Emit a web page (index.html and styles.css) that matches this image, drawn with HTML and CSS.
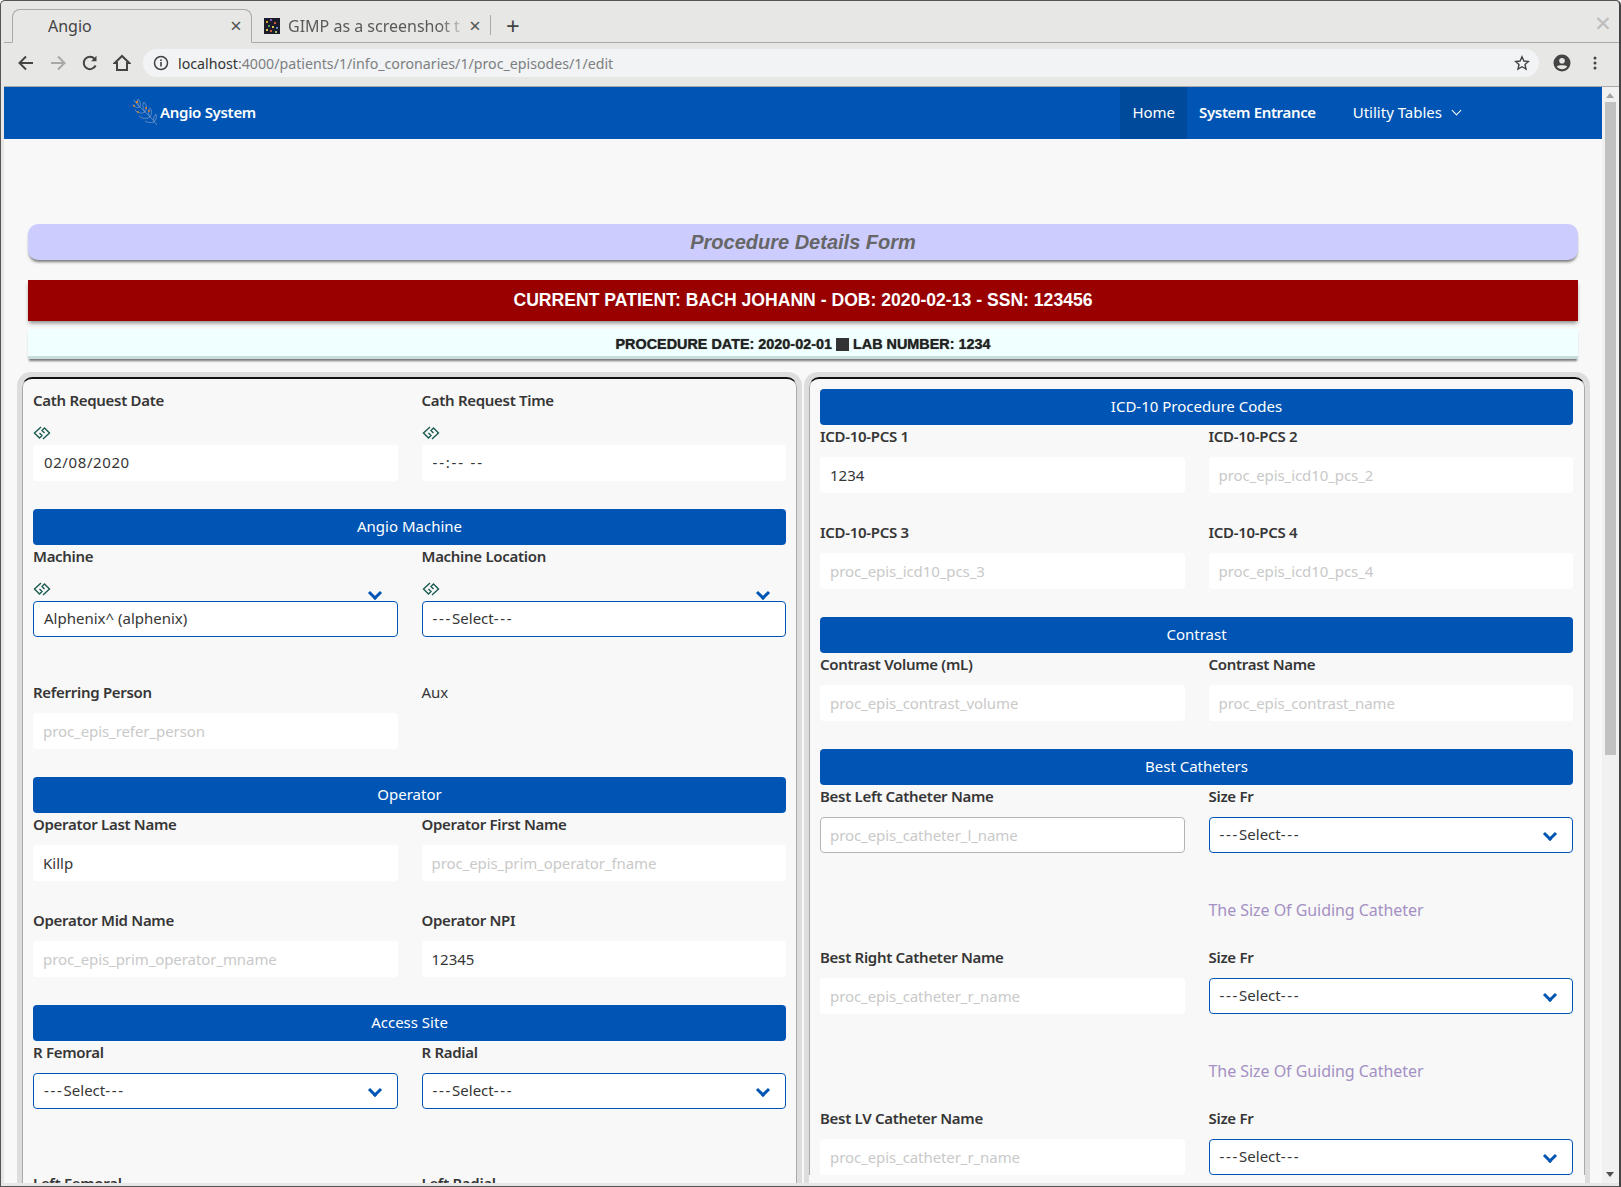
FILE: index.html
```html
<!DOCTYPE html>
<html lang="en">
<head>
  <meta charset="UTF-8" />
  <title>Angio</title>
  <link rel="stylesheet" href="styles.css">
</head>
<body>

<div class="window">

  <!-- Browser tabs -->
  <div class="tabbar">
    <div class="tab active">
      <span class="tab-title">Angio</span>
      <span class="tab-close">×</span>
    </div>
    <div class="tab other">
      <svg class="favicon" width="16" height="16" viewBox="0 0 16 16">
        <rect width="16" height="16" fill="#1b1b2a"/>
        <rect x="2" y="3" width="2" height="2" fill="#c9a227"/>
        <rect x="6" y="1" width="2" height="2" fill="#7a5fb0"/>
        <rect x="10" y="4" width="2" height="2" fill="#d05a3a"/>
        <rect x="4" y="7" width="2" height="2" fill="#4f9d5a"/>
        <rect x="8" y="8" width="2" height="2" fill="#d6c84a"/>
        <rect x="12" y="9" width="2" height="2" fill="#5a86c9"/>
        <rect x="2" y="11" width="2" height="2" fill="#d6c84a"/>
        <rect x="6" y="12" width="2" height="2" fill="#c9583f"/>
        <rect x="11" y="13" width="2" height="2" fill="#8fc46a"/>
      </svg>
      <span class="tab-title fade">GIMP as a screenshot t</span>
      <span class="tab-close">×</span>
    </div>
    <span class="tab-sep"></span>
    <span class="new-tab">+</span>
    <span class="win-close">×</span>
  </div>

  <!-- Browser toolbar -->
  <div class="toolbar">
    <svg class="tool" width="18" height="18" viewBox="0 0 18 18" fill="none" stroke="#444" stroke-width="2"><path d="M16 9H3M9 2.5 2.5 9 9 15.5"/></svg>
    <svg class="tool" width="18" height="18" viewBox="0 0 18 18" fill="none" stroke="#a8a8a8" stroke-width="2"><path d="M2 9h13M9 2.5 15.5 9 9 15.5"/></svg>
    <svg class="tool" width="18" height="18" viewBox="0 0 18 18" fill="none" stroke="#444" stroke-width="2"><path d="M14.6 11.5A6.2 6.2 0 1 1 13.6 4.8"/><path d="M15.5 1.8v5.4h-5.4z" fill="#444" stroke="none"/></svg>
    <svg class="tool" width="18" height="18" viewBox="0 0 18 18" fill="none" stroke="#444" stroke-width="2"><path d="M9 2 1.8 9H4v7h10V9h2.2z" stroke-linejoin="miter"/></svg>
    <div class="omnibox">
      <svg class="info" width="16" height="16" viewBox="0 0 16 16" fill="none"><circle cx="8" cy="8" r="6.5" stroke="#444" stroke-width="1.5"/><rect x="7.2" y="7" width="1.6" height="4.5" fill="#444"/><rect x="7.2" y="4.4" width="1.6" height="1.6" fill="#444"/></svg>
      <span class="url"><span class="host">localhost</span>:4000/patients/1/info_coronaries/1/proc_episodes/1/edit</span>
      <svg class="star" width="16" height="16" viewBox="0 0 16 16" fill="none" stroke="#444" stroke-width="1.4"><path d="M8 1.8l1.9 4.2 4.5.5-3.4 3 1 4.5L8 11.7 4 14l1-4.5-3.4-3 4.5-.5z"/></svg>
    </div>
    <svg class="avatar" width="18" height="18" viewBox="0 0 18 18"><circle cx="9" cy="9" r="8.5" fill="#444"/><circle cx="9" cy="6.8" r="2.8" fill="#e7e7e5"/><path d="M3.8 12.6C5 10.8 13 10.8 14.2 12.6 13 14.4 11 15.2 9 15.2S5 14.4 3.8 12.6z" fill="#e7e7e5"/></svg>
    <svg class="dots" width="4" height="14" viewBox="0 0 4 14" fill="#444"><circle cx="2" cy="2" r="1.5"/><circle cx="2" cy="7" r="1.5"/><circle cx="2" cy="12" r="1.5"/></svg>
  </div>

  <div class="viewport">
    <div class="page">

      <nav class="navbar">
        <a class="brand">
          <svg class="logo" width="28" height="30" viewBox="0 0 28 30" fill="none" stroke="#7597c6" stroke-width="0.8">
            <path d="M26 28C22 22 16 17 12 13 9 10 6 8 3 3"/>
            <path d="M9 10C6 11 3 10 2 7M9 10C10 7 9 3 7 2 6 5 7 8 9 10z"/>
            <path d="M14 15C11 17 6 16 4 13M14 15C16 12 16 8 13 5 11 8 12 12 14 15z"/>
            <path d="M19 20C16 22 11 22 8 19M19 20C21 17 21 13 19 11 17 13 17 17 19 20z"/>
            <path d="M23 25C20 26 17 26 14 24M23 25C25 23 26 20 25 17 23 19 22 22 23 25z"/>
            <circle cx="6" cy="5" r="1.200" fill="#d9822b" stroke="none"/>
            <circle cx="3" cy="9" r="1" fill="#d9822b" stroke="none"/>
            <circle cx="15" cy="11" r="1.100" fill="#d9822b" stroke="none"/>
            <circle cx="18" cy="14" r="1" fill="#d9822b" stroke="none"/>
            <circle cx="7" cy="15" r="1" fill="#d9822b" stroke="none"/>
          </svg>
          <span>Angio System</span>
        </a>
        <div class="nav-menu">
          <a class="nav-item current">Home</a>
          <a class="nav-item strong">System Entrance</a>
          <a class="nav-item dropdown">Utility Tables <i class="nav-arrow"></i></a>
        </div>
      </nav>

      <h2 class="form-title">Procedure Details Form</h2>
      <div class="patient-bar">CURRENT PATIENT: BACH JOHANN - DOB: 2020-02-13 - SSN: 123456</div>
      <div class="proc-bar">PROCEDURE DATE: 2020-02-01 <span class="square"></span> LAB NUMBER: 1234</div>

      <div class="panels">

        <section class="panel">
          <div class="panel-inner">
            <div class="row">
              <div class="field">
                <label>Cath Request Date</label>
                <div class="req-icon"><svg width="18" height="14" viewBox="0 0 18 14"><use href="#link-mark"/></svg></div>
                <input class="input date" value="02/08/2020">
              </div>
              <div class="field">
                <label>Cath Request Time</label>
                <div class="req-icon"><svg width="18" height="14" viewBox="0 0 18 14"><use href="#link-mark"/></svg></div>
                <input class="input time" value="--:-- --">
              </div>
            </div>

            <div class="band">Angio Machine</div>
            <div class="row tall">
              <div class="field">
                <label>Machine</label>
                <div class="select-wrap lifted">
                  <div class="req-icon"><svg width="18" height="14" viewBox="0 0 18 14"><use href="#link-mark"/></svg></div>
                  <div class="select">Alphenix^ (alphenix)</div>
                  <i class="arrow"></i>
                </div>
              </div>
              <div class="field">
                <label>Machine Location</label>
                <div class="select-wrap lifted">
                  <div class="req-icon"><svg width="18" height="14" viewBox="0 0 18 14"><use href="#link-mark"/></svg></div>
                  <div class="select"><span class="dash">---</span>Select<span class="dash">---</span></div>
                  <i class="arrow"></i>
                </div>
              </div>
            </div>

            <div class="row">
              <div class="field">
                <label>Referring Person</label>
                <input class="input" placeholder="proc_epis_refer_person">
              </div>
              <div class="field">
                <label class="plain">Aux</label>
              </div>
            </div>

            <div class="band">Operator</div>
            <div class="row">
              <div class="field">
                <label>Operator Last Name</label>
                <input class="input" value="Killp">
              </div>
              <div class="field">
                <label>Operator First Name</label>
                <input class="input" placeholder="proc_epis_prim_operator_fname">
              </div>
            </div>
            <div class="row">
              <div class="field">
                <label>Operator Mid Name</label>
                <input class="input" placeholder="proc_epis_prim_operator_mname">
              </div>
              <div class="field">
                <label>Operator NPI</label>
                <input class="input" value="12345">
              </div>
            </div>

            <div class="band">Access Site</div>
            <div class="row taller">
              <div class="field">
                <label>R Femoral</label>
                <div class="select-wrap">
                  <div class="select"><span class="dash">---</span>Select<span class="dash">---</span></div>
                  <i class="arrow"></i>
                </div>
              </div>
              <div class="field">
                <label>R Radial</label>
                <div class="select-wrap">
                  <div class="select"><span class="dash">---</span>Select<span class="dash">---</span></div>
                  <i class="arrow"></i>
                </div>
              </div>
            </div>
            <div class="row">
              <div class="field"><label>Left Femoral</label></div>
              <div class="field"><label>Left Radial</label></div>
            </div>
          </div>
        </section>

        <section class="panel">
          <div class="panel-inner">
            <div class="band">ICD-10 Procedure Codes</div>
            <div class="row">
              <div class="field">
                <label>ICD-10-PCS 1</label>
                <input class="input" value="1234">
              </div>
              <div class="field">
                <label>ICD-10-PCS 2</label>
                <input class="input" placeholder="proc_epis_icd10_pcs_2">
              </div>
            </div>
            <div class="row">
              <div class="field">
                <label>ICD-10-PCS 3</label>
                <input class="input" placeholder="proc_epis_icd10_pcs_3">
              </div>
              <div class="field">
                <label>ICD-10-PCS 4</label>
                <input class="input" placeholder="proc_epis_icd10_pcs_4">
              </div>
            </div>

            <div class="band">Contrast</div>
            <div class="row">
              <div class="field">
                <label>Contrast Volume (mL)</label>
                <input class="input" placeholder="proc_epis_contrast_volume">
              </div>
              <div class="field">
                <label>Contrast Name</label>
                <input class="input" placeholder="proc_epis_contrast_name">
              </div>
            </div>

            <div class="band">Best Catheters</div>
            <div class="row snug">
              <div class="field">
                <label>Best Left Catheter Name</label>
                <input class="input outlined" placeholder="proc_epis_catheter_l_name">
              </div>
              <div class="field">
                <label>Size Fr</label>
                <div class="select-wrap">
                  <div class="select"><span class="dash">---</span>Select<span class="dash">---</span></div>
                  <i class="arrow"></i>
                </div>
                <p class="help">The Size Of Guiding Catheter</p>
              </div>
            </div>
            <div class="row snug">
              <div class="field">
                <label>Best Right Catheter Name</label>
                <input class="input" placeholder="proc_epis_catheter_r_name">
              </div>
              <div class="field">
                <label>Size Fr</label>
                <div class="select-wrap">
                  <div class="select"><span class="dash">---</span>Select<span class="dash">---</span></div>
                  <i class="arrow"></i>
                </div>
                <p class="help">The Size Of Guiding Catheter</p>
              </div>
            </div>
            <div class="row snug">
              <div class="field">
                <label>Best LV Catheter Name</label>
                <input class="input" placeholder="proc_epis_catheter_r_name">
              </div>
              <div class="field">
                <label>Size Fr</label>
                <div class="select-wrap">
                  <div class="select"><span class="dash">---</span>Select<span class="dash">---</span></div>
                  <i class="arrow"></i>
                </div>
              </div>
            </div>
          </div>
        </section>

      </div>
    </div>

    <div class="scrollbar">
      <i class="sb-up"></i>
      <div class="sb-thumb"></div>
      <i class="sb-down"></i>
    </div>
  </div>
</div>

<svg width="0" height="0" class="defs">
  <symbol id="link-mark" viewBox="0 0 18 14">
    <path d="M8 1 1.500 7l5 5L9 9.500 6.500 7M10 13 16.500 7l-5-5L9 4.500 11.500 7" fill="none" stroke="#1a5a50" stroke-width="1.400"/>
  </symbol>
</svg>

</body>
</html>
```

FILE: styles.css
```css
:root {
  --blue: #0055b4;
  --text: #363636;
  --page: #f8f8f8;
  --chrome: #e7e7e5;
}

* {
  box-sizing: border-box;
}

html, body {
  margin: 0;
  height: 100%;
  overflow: hidden;
}

body {
  font-family: "Noto Sans", sans-serif;
  font-size: 15px;
  color: var(--text);
}

.defs {
  position: absolute;
}

.window {
  width: 1621px;
  height: 1187px;
  display: flex;
  flex-direction: column;
  background: var(--chrome);
  border-top: 1px solid #555;
  border-left: 1px solid #555;
  border-right: 2px solid #444;
  border-bottom: 1px solid #555;
  border-radius: 5px 5px 0 0;
  padding: 0 0 3px 3px;
  overflow: hidden;
}

/* browser tabs */
.tabbar {
  height: 42px;
  flex: none;
  display: flex;
  align-items: flex-end;
  border-bottom: 1px solid #a9a9a7;
  position: relative;
}

.tab {
  height: 33px;
  display: flex;
  align-items: center;
  font-size: 16px;
  color: #444;
}

.tab.active {
  width: 240px;
  margin-left: 8px;
  padding: 0 7px 0 35px;
  border: 1px solid #a9a9a7;
  border-bottom: 1px solid var(--chrome);
  border-radius: 8px 8px 0 0;
  margin-bottom: -1px;
  height: 34px;
}

.tab.other {
  width: 237px;
  padding: 0 6px 0 12px;
}

.tab-title {
  flex: 1;
  white-space: nowrap;
  overflow: hidden;
}

.tab-title.fade {
  margin-left: 8px;
  color: #5a5a5a;
  -webkit-mask-image: linear-gradient(to right, #000 85%, transparent);
}

.tab-close {
  font-size: 20px;
  line-height: 1;
  width: 16px;
  text-align: center;
  color: #555;
}

.favicon {
  flex: none;
}

.tab-sep {
  width: 1px;
  height: 20px;
  background: #aaa;
  margin: 0 0 7px 1px;
}

.new-tab {
  font-size: 24px;
  line-height: 33px;
  margin-left: 15px;
  color: #444;
}

.win-close {
  position: absolute;
  right: 8px;
  top: 6px;
  font-size: 28px;
  line-height: 30px;
  color: #bdbdbd;
}

/* browser toolbar */
.toolbar {
  height: 44px;
  flex: none;
  display: flex;
  align-items: center;
  padding: 0 15px 3px 13px;
  border-bottom: 1px solid #aaa;
}

.tool {
  margin-right: 14px;
  flex: none;
}

.omnibox {
  width: 1396px;
  height: 28px;
  margin-left: -2px;
  background: #f1f3f4;
  border-radius: 14px;
  display: flex;
  align-items: center;
  padding: 0 9px 0 10px;
  font-size: 14.200px;
}

.info {
  flex: none;
  margin-right: 9px;
}

.url {
  flex: 1;
  color: #7d7f82;
}

.host {
  color: #333;
}

.avatar {
  margin-left: 14px;
}

.dots {
  margin-left: 22px;
}

/* page */
.viewport {
  flex: 1;
  display: flex;
  min-height: 0;
}

.page {
  width: 1598px;
  background: var(--page);
  overflow: hidden;
}

.scrollbar {
  width: 17px;
  background: #f1f1f1;
  display: flex;
  flex-direction: column;
  align-items: center;
  position: relative;
}

.sb-thumb {
  width: 11px;
  height: 653px;
  margin-top: 15px;
  background: #c1c1c1;
}

.sb-up, .sb-down {
  position: absolute;
  left: 4px;
  width: 0;
  height: 0;
  border: 4px solid transparent;
}

.sb-up {
  top: 2px;
  border-bottom: 5px solid #a3a3a3;
}

.sb-down {
  bottom: 2px;
  border-top: 5px solid #505050;
}

.navbar {
  height: 52px;
  padding-bottom: 2px;
  background: var(--blue);
  display: flex;
  justify-content: space-between;
  color: #fff;
}

.brand {
  display: flex;
  align-items: center;
  margin-left: 127px;
  font-weight: 600;
  font-size: 15px;
  letter-spacing: -0.3px;
}

.logo {
  margin-right: 1px;
}

.nav-menu {
  display: flex;
  margin-right: 139px;
  margin-bottom: -2px;
}

.nav-item {
  display: flex;
  align-items: center;
  padding: 0 12px 2px;
}

.nav-item.current {
  background: #004a9c;
}

.nav-item.strong {
  font-weight: 600;
  letter-spacing: -0.35px;
  padding-right: 13px;
}

.nav-item.dropdown {
  margin-left: 24px;
  padding: 0 0 2px;
}

.nav-arrow {
  width: 7px;
  height: 7px;
  margin: -3px 3px 0 11px;
  border-left: 1.500px solid #fff;
  border-bottom: 1.500px solid #fff;
  transform: rotate(-45deg);
}

.form-title {
  height: 36px;
  margin: 85px 24px 0;
  background: #ccccff;
  border-radius: 10px;
  box-shadow: 0 3px 3px -1px #777;
  font: italic bold 20px/36px "Liberation Sans", sans-serif;
  color: #666;
  text-align: center;
}

.patient-bar {
  height: 41px;
  margin: 20px 24px 0;
  background: #990000;
  box-shadow: 0 3px 4px -1px #888;
  font: bold 17.600px/40px "Liberation Sans", sans-serif;
  color: #fff;
  text-align: center;
}

.proc-bar {
  height: 30px;
  margin: 8px 24px 0;
  background: #f0ffff;
  border-bottom: 3px solid #c8dcdc;
  box-shadow: 0 3px 2px -1px #777;
  font: bold 14.400px/30px "Liberation Sans", sans-serif;
  color: #222;
  text-shadow: 0 0 1px #555;
  text-align: center;
}

.square {
  display: inline-block;
  width: 13px;
  height: 13px;
  background: #333;
  vertical-align: -2px;
}

.panels {
  display: grid;
  grid-template-columns: 785px 786px;
  column-gap: 2px;
  margin: 13px 0 0 13px;
}

.panel {
  border: 5px solid #ddd;
  border-bottom: none;
  border-radius: 14px 14px 0 0;
}

.panel-inner {
  border-top: 2px solid #111;
  border-left: 1px solid #aaa;
  border-right: 1px solid #aaa;
  border-radius: 10px 10px 0 0;
  padding: 10px 10px 0;
}

.panel + .panel .panel-inner {
  padding-right: 11px;
}

.band {
  height: 36px;
  background: var(--blue);
  border-radius: 4px;
  color: #fff;
  line-height: 34px;
  text-align: center;
}

.row {
  display: grid;
  grid-template-columns: 1fr 1fr;
  column-gap: 24px;
  margin-bottom: 28px;
}

.row.tall {
  margin-bottom: 44px;
}

.row.taller {
  margin-bottom: 63px;
}

.row.snug {
  margin-bottom: 0;
}

.field label {
  display: block;
  height: 24px;
  margin-bottom: 8px;
  line-height: 22px;
  font-weight: 600;
  letter-spacing: -0.3px;
}

.field label.plain {
  font-weight: 400;
  letter-spacing: 0;
}

.req-icon {
  height: 24px;
  display: flex;
  align-items: center;
}

.input, .select {
  display: block;
  width: 100%;
  height: 36px;
  padding: 0 9px;
  background: #fff;
  border: 1px solid transparent;
  border-radius: 4px;
  font: inherit;
  line-height: 32px;
  color: var(--text);
  outline: none;
  appearance: none;
}

.input.date {
  padding: 0 9px 2px 10px;
  letter-spacing: 0.6px;
}

.input.time {
  padding: 0 9px 2px 10px;
  letter-spacing: 1.800px;
}

.input::placeholder {
  color: #c9c9c9;
  letter-spacing: -0.08px;
  opacity: 1;
}

.input.outlined {
  border-color: #b5b5b5;
}

.select {
  padding-left: 10px;
  border-color: var(--blue);
}

.dash {
  letter-spacing: 1.700px;
}

.select-wrap {
  position: relative;
}

.arrow {
  position: absolute;
  right: 18px;
  top: 12px;
  width: 10px;
  height: 10px;
  border-left: 3px solid var(--blue);
  border-bottom: 3px solid var(--blue);
  transform: rotate(-45deg);
}

.select-wrap.lifted .arrow {
  top: 11px;
}

.help {
  height: 24px;
  margin: 45px 0 24px;
  line-height: 24px;
  font-size: 16px;
  letter-spacing: -0.05px;
  color: #a490c4;
}
```
